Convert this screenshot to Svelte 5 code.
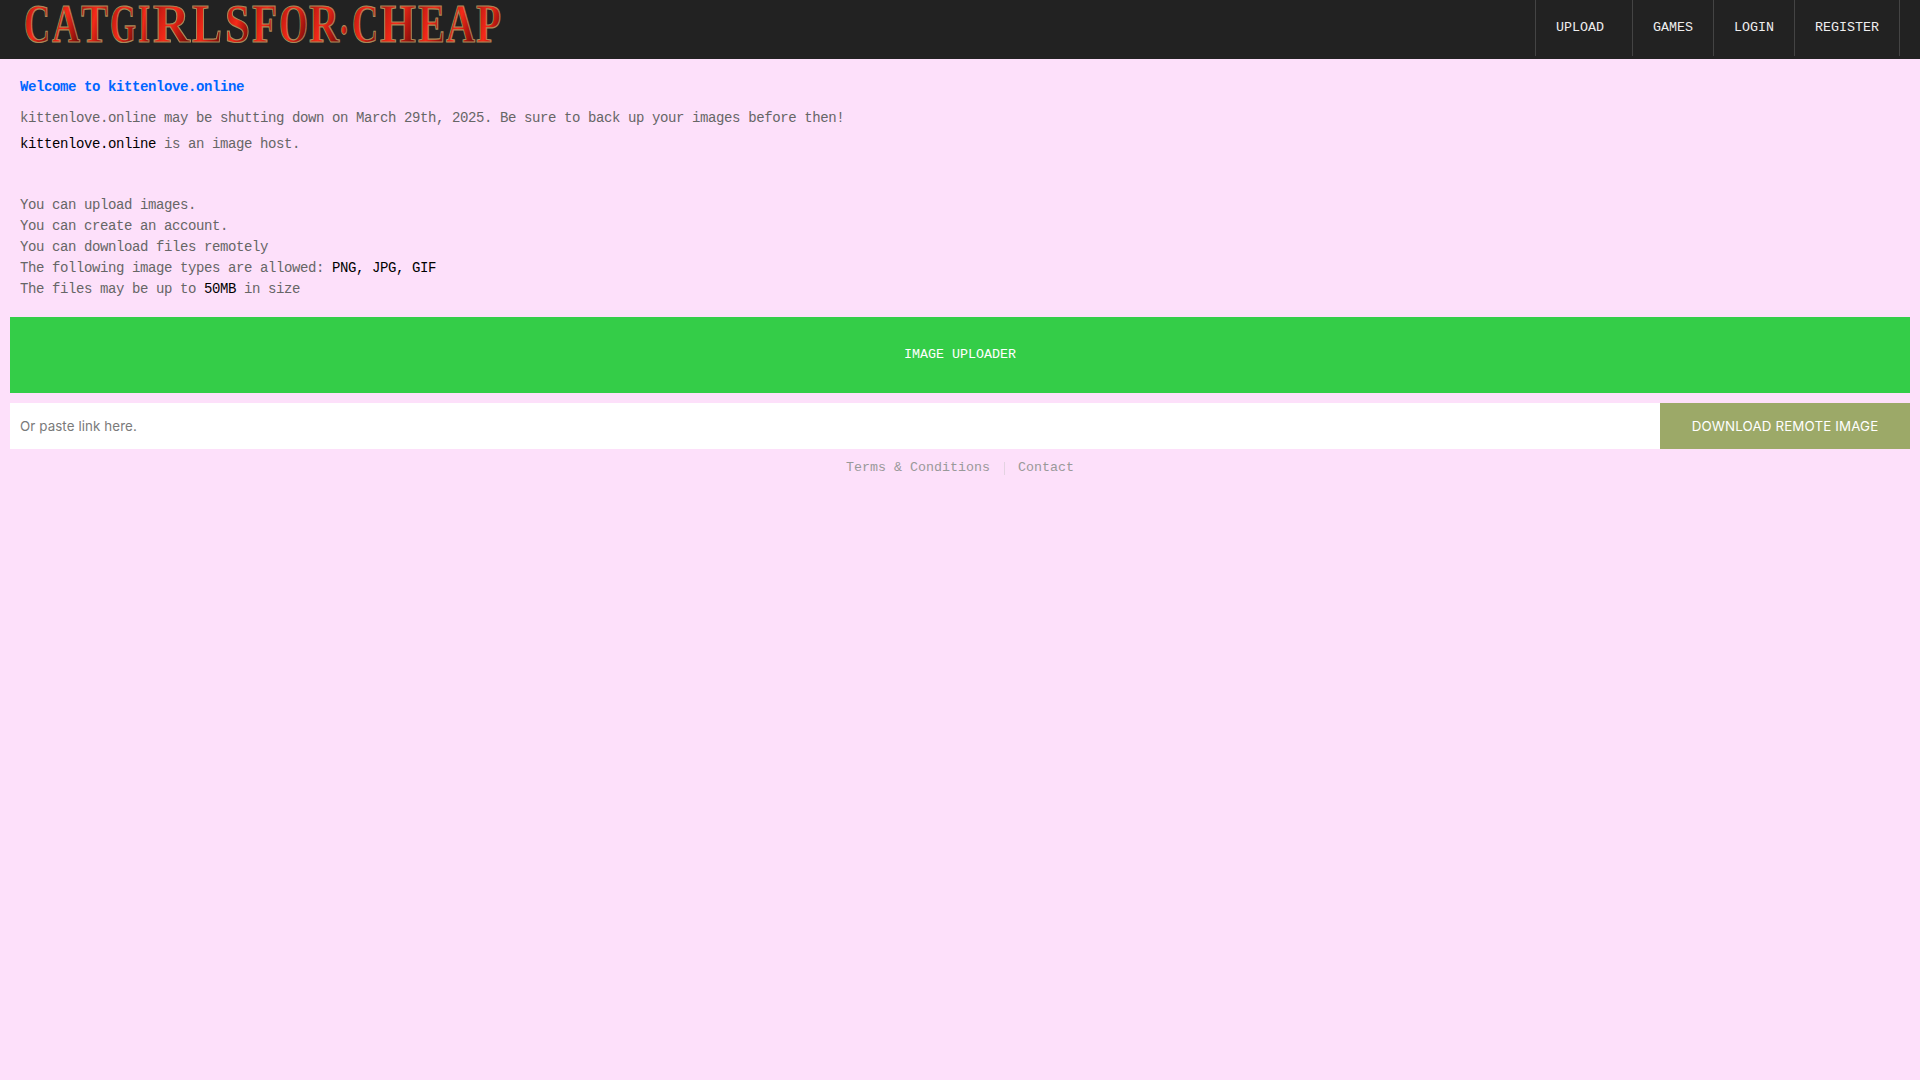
<script lang="ts">
	const navItems = [
		{ label: 'UPLOAD', extra: true },
		{ label: 'GAMES' },
		{ label: 'LOGIN' },
		{ label: 'REGISTER' }
	];

	// logo is an image on the real site, letters placed by hand
	const logoLetters = [
		{ ch: 'C', x: 24, w: 26, y: 42 },
		{ ch: 'A', x: 52, w: 28, y: 42 },
		{ ch: 'T', x: 81, w: 27, y: 42 },
		{ ch: 'G', x: 110, w: 26, y: 42 },
		{ ch: 'I', x: 138, w: 12, y: 42 },
		{ ch: 'R', x: 153, w: 37, y: 42 },
		{ ch: 'L', x: 192, w: 30, y: 42 },
		{ ch: 'S', x: 225, w: 25, y: 42 },
		{ ch: 'F', x: 252, w: 25, y: 42 },
		{ ch: 'O', x: 279, w: 29, y: 42 },
		{ ch: 'R', x: 309, w: 30, y: 42 },
		{ ch: '.', x: 340, w: 8, y: 34 },
		{ ch: 'C', x: 352, w: 26, y: 42 },
		{ ch: 'H', x: 380, w: 36, y: 42 },
		{ ch: 'E', x: 418, w: 27, y: 42 },
		{ ch: 'A', x: 446, w: 29, y: 42 },
		{ ch: 'P', x: 476, w: 25, y: 42 }
	];
</script>

<header class="topbar">
	<a class="logo" href="#top" aria-label="catgirlsfor.cheap">
		<svg width="520" height="59" viewBox="0 0 520 59">
			<defs>
				<linearGradient id="logoFill" x1="0" y1="0" x2="1" y2="0.6">
					<stop offset="0" stop-color="#8a100b" />
					<stop offset="0.3" stop-color="#d01e14" />
					<stop offset="0.55" stop-color="#f52a18" />
					<stop offset="0.8" stop-color="#b5170f" />
					<stop offset="1" stop-color="#7f0e09" />
				</linearGradient>
			</defs>
			{#each logoLetters as l}
				<text
					class="logo-letter"
					x={l.x}
					y={l.y}
					textLength={l.w}
					lengthAdjust="spacingAndGlyphs"
					fill="url(#logoFill)">{l.ch}</text>
			{/each}
		</svg>
	</a>

	<nav class="nav">
		{#each navItems as item}
			<a href="#top" class="nav-link" class:extra={item.extra}>{item.label}</a>
		{/each}
	</nav>
</header>

<main class="content">
	<div class="intro">
		<h1>Welcome to kittenlove.online</h1>
		<p class="notice">kittenlove.online may be shutting down on March 29th, 2025. Be sure to back up your images before then!</p>
		<p class="host"><b>kittenlove.online</b> is an image host.</p>
		<ul>
			<li>You can upload images.</li>
			<li>You can create an account.</li>
			<li>You can download files remotely</li>
			<li>The following image types are allowed: <b>PNG, JPG, GIF</b></li>
			<li>The files may be up to <b>50MB</b> in size</li>
		</ul>
	</div>

	<button class="uploader">IMAGE UPLOADER</button>

	<form class="remote" onsubmit={(e) => e.preventDefault()}>
		<input type="text" placeholder="Or paste link here." />
		<button type="submit">DOWNLOAD REMOTE IMAGE</button>
	</form>

	<footer class="links">
		<a href="#top">Terms &amp; Conditions</a>
		<span class="sep"></span>
		<a href="#top">Contact</a>
	</footer>
</main>

<style>
	:global(body) {
		background: #fde0fa;
		font-family: "Liberation Mono", monospace;
		font-size: 13.33px;
		color: #666;
	}

	.topbar {
		display: flex;
		justify-content: space-between;
		height: 59px;
		background: #222;
	}

	.logo {
		display: block;
		height: 59px;
	}

	.logo-letter {
		font-family: "Liberation Serif", serif;
		font-weight: 700;
		font-size: 54px;
		stroke: #a98a58;
		stroke-width: 1.2px;
	}

	.nav {
		display: flex;
		height: 56px;
		margin-right: 20px;
		border-right: 1px solid #444;
	}

	.nav-link {
		display: flex;
		align-items: center;
		padding: 0 20px 1px;
		border-left: 1px solid #444;
		color: #eee;
		text-decoration: none;
	}

	.nav-link.extra {
		padding-right: 28px;
	}

	.content {
		padding: 0 10px;
	}

	.intro {
		padding: 20px 10px 0;
		font-size: 14px;
		letter-spacing: -0.4px;
	}

	h1 {
		margin: 0;
		font-size: 14px;
		line-height: 16px;
		font-weight: 700;
		color: #0066ff;
	}

	p {
		margin: 0;
		line-height: 16px;
	}

	.notice {
		margin-top: 15px;
	}

	.host {
		margin-top: 10px;
	}

	b {
		font-weight: 400;
		color: #000;
	}

	ul {
		margin: 43px 0 0;
		padding: 0;
		list-style: none;
		line-height: 21px;
	}

	.uploader {
		display: block;
		width: 100%;
		height: 76px;
		margin-top: 17px;
		padding: 0 0 1px;
		border: none;
		background: #34cd48;
		color: #fff;
		font: inherit;
	}

	.remote {
		display: flex;
		height: 46px;
		margin-top: 10px;
	}

	.remote input {
		flex: 1;
		min-width: 0;
		padding: 0 10px;
		border: none;
		background: #fff;
		font-family: Inter, sans-serif;
		font-size: 13.33px;
		letter-spacing: 0.1px;
	}

	.remote input::placeholder {
		color: #7a7a7a;
	}

	.remote button {
		width: 250px;
		border: none;
		background: #9ca968;
		color: #fff;
		font-family: Inter, sans-serif;
		font-size: 13.33px;
		letter-spacing: 0.15px;
	}

	.links {
		display: flex;
		justify-content: center;
		align-items: center;
		margin-top: 11px;
		line-height: 16px;
	}

	.links a {
		color: #999;
		text-decoration: none;
	}

	.sep {
		width: 1px;
		height: 13px;
		margin: 0 13px 0 14px;
		background: #e3d3e1;
	}
</style>
